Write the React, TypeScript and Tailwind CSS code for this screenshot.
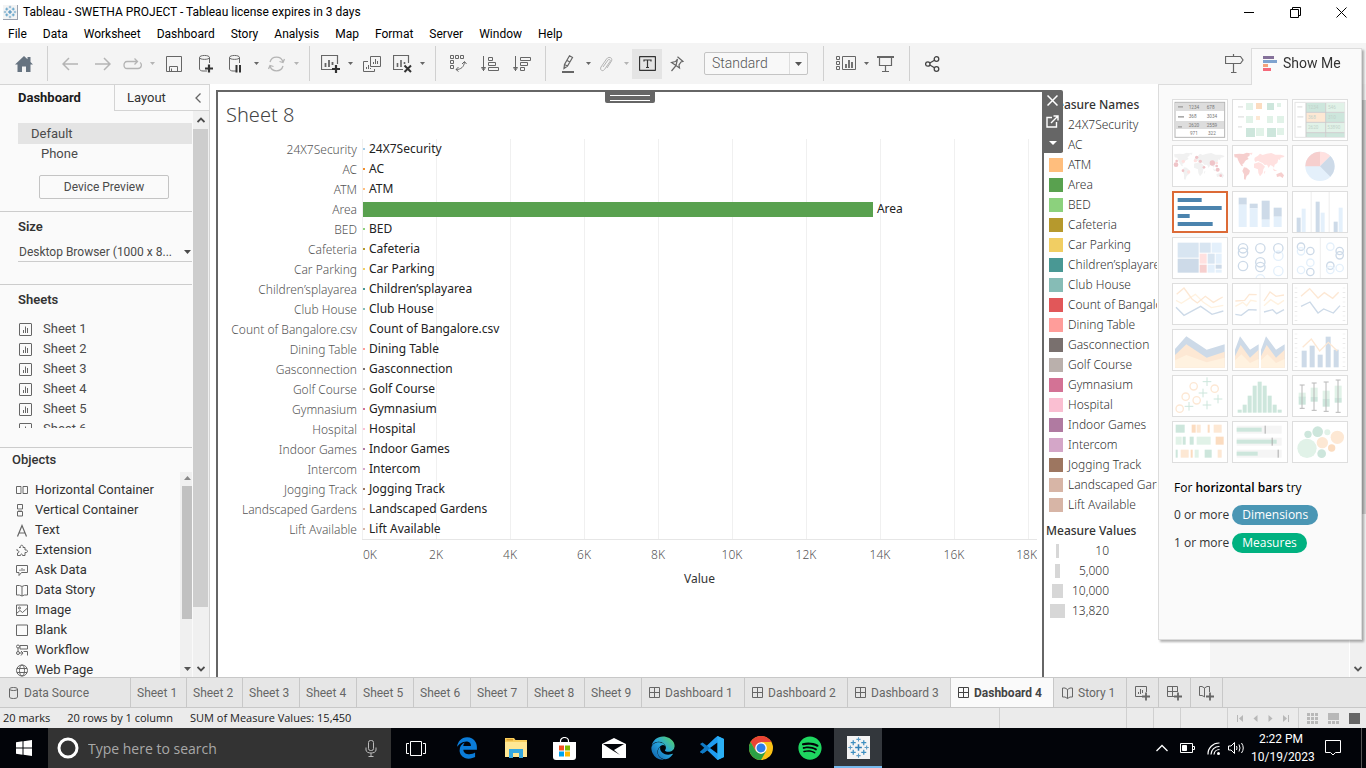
import React from 'react';
import { FaEdge, FaEdgeLegacy, FaSpotify } from 'react-icons/fa';

type Kids = { children?: React.ReactNode };

const Svg = ({ w, h, children, cls = '' }: Kids & { w: number; h: number; cls?: string }) => (
  <svg width={w} height={h} viewBox={`0 0 ${w} ${h}`} fill="none" stroke="currentColor" className={`shrink-0 ${cls}`} aria-hidden="true">
    {children}
  </svg>
);

/* ---------- Logo ---------- */
const plus = (x: number, y: number, r: number) => `M${x - r} ${y}H${x + r}M${x} ${y - r}V${y + r}`;
const TableauMark = ({ size }: { size: number }) => (
  <svg width={size} height={size} viewBox="0 0 24 24" fill="none" aria-hidden="true">
    <rect width="24" height="24" fill="#f4f4f4" />
    <path d={plus(12, 12, 3.5)} stroke="#2f7fb5" strokeWidth="1.6" />
    <path d={plus(6.5, 7, 2.6) + plus(17.5, 7, 2.6) + plus(6.5, 17, 2.6) + plus(17.5, 17, 2.6)} stroke="#3d8fc0" strokeWidth="1.3" />
    <path d={plus(12, 3.5, 2.2) + plus(12, 20.5, 2.2) + plus(3.5, 12, 2.2) + plus(20.5, 12, 2.2)} stroke="#5b9bc4" strokeWidth="1.1" />
  </svg>
);

/* ---------- Title and menu ---------- */
function TitleBar() {
  return (
    <header className="bg-white text-black">
      <div className="flex h-6 items-center">
        <div className="ml-[3px] flex size-[15px] items-center justify-center border-r border-b border-gray-400">
          <TableauMark size={14} />
        </div>
        <h1 className="ml-[5px] text-[12px] leading-4">Tableau - SWETHA PROJECT - Tableau license expires in 3 days</h1>
        <div className="mr-0.5 ml-auto flex">
          <button aria-label="Minimize" className="flex w-[46px] justify-center"><Svg w={11} h={11}><path d="M0 5.500H10" /></Svg></button>
          <button aria-label="Restore" className="flex w-[46px] justify-center"><Svg w={11} h={11}><path d="M.5 2.500H8.500V10.500H.5ZM2.500 2.500V.5H10.500V8.500H8.500" /></Svg></button>
          <button aria-label="Close" className="flex w-[46px] justify-center"><Svg w={11} h={11}><path d="M.5 .5L10.500 10.500M10.500 .5L.5 10.500" /></Svg></button>
        </div>
      </div>
      <nav className="flex h-[19px] items-center gap-4 pl-2 text-[12px]">
        {['File', 'Data', 'Worksheet', 'Dashboard', 'Story', 'Analysis', 'Map', 'Format', 'Server', 'Window', 'Help'].map((m) => (
          <button key={m}>{m}</button>
        ))}
      </nav>
    </header>
  );
}

/* ---------- Toolbar ---------- */
const Sep = () => <span className="mr-1.5 ml-[7px] h-[35px] w-px bg-[#d0d0d0]" />;
const Tool = ({ label, w = 'w-8', cls = 'text-[#666]', children }: Kids & { label: string; w?: string; cls?: string }) => (
  <button aria-label={label} className={`flex h-[30px] shrink-0 items-center justify-center ${w} ${cls}`}>{children}</button>
);
const Caret = ({ label, cls = 'text-[#666]' }: { label: string; cls?: string }) => (
  <Tool label={label} w="w-3" cls={cls}><Svg w={5} h={3}><path d="M0 0H5L2.500 3Z" fill="currentColor" stroke="none" /></Svg></Tool>
);
const cylinder = 'M9 17H5C3 17 1.500 16 1.500 15V3.500C1.500 .8 11.500 .8 11.500 3.500V9M1.500 3.500C1.500 6 11.500 6 11.500 3.500';

function Toolbar() {
  return (
    <div role="toolbar" aria-label="Main" className="flex h-[41px] items-center bg-[#f4f4f4]">
      <Tool label="Home" w="w-10 pl-2" cls="text-[#667380]"><Svg w={18} h={16}><path d="M9 0L0 8.500H2.500V16H7V10.500H11V16H15.500V8.500H18L15.500 6V1H12.500V3.200Z" fill="currentColor" stroke="none" /></Svg></Tool>
      <Sep />
      <Tool label="Undo" cls="text-[#b4b4b4]"><Svg w={17} h={14}><path d="M16 7H1M7 1L1 7L7 13" strokeWidth="1.500" /></Svg></Tool>
      <Tool label="Redo" cls="text-[#b4b4b4]"><Svg w={17} h={14}><path d="M1 7H16M10 1L16 7L10 13" strokeWidth="1.500" /></Svg></Tool>
      <Tool label="Replay animation" w="w-7" cls="text-[#b4b4b4]"><Svg w={19} h={12}><path d="M14 3.500H4C0 3.500 0 10.500 4 10.500H15C19 10.500 19 5.500 17 4.500M11.500 .5L14.500 3.500L11.500 6.500" strokeWidth="1.300" /></Svg></Tool>
      <Caret label="Replay options" cls="text-[#b4b4b4]" />
      <Tool label="Save"><Svg w={16} h={16}><path d="M.5 .5H15.500V15.500H.5ZM3.500 15V10.500H11.500V15M5.500 15V12.500" /></Svg></Tool>
      <Tool label="New data source"><Svg w={16} h={20}><path d={cylinder} /><path d="M7 14.500H15M11 10.500V18.500" strokeWidth="2.200" stroke="#333" /></Svg></Tool>
      <Tool label="Pause auto updates" w="w-7"><Svg w={16} h={20}><path d={cylinder} /><path d="M8.500 11V18.500M12 11V18.500" strokeWidth="2" stroke="#333" /></Svg></Tool>
      <Caret label="Pause options" />
      <Tool label="Refresh" w="w-7" cls="text-[#b4b4b4]"><Svg w={17} h={16}><path d="M2 6A6.800 6.800 0 0 1 15 6M15 10A6.800 6.800 0 0 1 2 10M16.500 3L15 6.500L11.500 5.500M.5 13L2 9.500L5.500 10.500" strokeWidth="1.300" /></Svg></Tool>
      <Caret label="Refresh options" cls="text-[#b4b4b4]" />
      <Sep />
      <Tool label="New worksheet" w="w-7"><Svg w={19} h={18}><path d="M11 14.500H.5V.5H16.500V9" strokeWidth="1.200" /><path d="M4.500 12V8M8 12V5M11.500 10V7" strokeWidth="1.800" /><path d="M11 14H19M15 10V18" strokeWidth="2.200" stroke="#333" /></Svg></Tool>
      <Caret label="New options" />
      <Tool label="Duplicate"><Svg w={18} h={16}><path d="M7.500 .5H17.500V10.500H7.500ZM5 5.500H.5V15.500H11.500V13" /><path d="M10.500 8V6M12.500 8V3M14.500 8V5M3.500 13V11M5.500 13V9M7.500 13V12" /></Svg></Tool>
      <Tool label="Clear sheet" w="w-7"><Svg w={19} h={18}><path d="M10 14.500H.5V.5H15.500V8" strokeWidth="1.200" /><path d="M4.500 12V8M8 12V5M11.500 9V7" strokeWidth="1.600" /><path d="M11.500 10.500L18 17M18 10.500L11.500 17" strokeWidth="2" stroke="#333" /></Svg></Tool>
      <Caret label="Clear options" />
      <Sep />
      <Tool label="Swap rows and columns"><Svg w={17} h={17}><path d="M.5 .5H3.500V3.500H.5ZM5.500 .5H8.500V3.500H5.500ZM10.500 .5H13.500V3.500H10.500ZM.5 5.500H3.500V8.500H.5ZM.5 10.500H3.500V13.500H.5ZM6 14.500C11 14.500 14 12 14.500 7M12 9L14.500 6.500L16.500 9M8.500 12L6 14.500L8.500 16.500" /></Svg></Tool>
      <Tool label="Sort ascending"><Svg w={18} h={16}><path d="M2.500 0V15M.5 11.500L2.500 14.500L4.500 11.500ZM7.500 1.500H11.500V4.500H7.500ZM7.500 6.500H14.500V9.500H7.500ZM7.500 11.500H17.500V14.500H7.500Z" /></Svg></Tool>
      <Tool label="Sort descending"><Svg w={18} h={16}><path d="M2.500 0V15M.5 11.500L2.500 14.500L4.500 11.500ZM7.500 1.500H17.500V4.500H7.500ZM7.500 6.500H14.500V9.500H7.500ZM7.500 11.500H11.500V14.500H7.500Z" /></Svg></Tool>
      <Sep />
      <Tool label="Highlight" w="w-8"><Svg w={14} h={18}><path d="M8.500 .8L11.500 2.500L6.500 11L3 13.500L3.500 9.500ZM3.500 9.500L6.500 11M9 7L6 5.500" strokeWidth="1.200" /><path d="M1 17H13" strokeWidth="2" /></Svg></Tool>
      <Tool label="Highlight options" w="w-2"><Svg w={5} h={3}><path d="M0 0H5L2.500 3Z" fill="currentColor" stroke="none" /></Svg></Tool>
      <Tool label="Group members" w="w-7" cls="text-[#b4b4b4]"><Svg w={14} h={16}><path d="M4 11L9 4C10 2.500 12 4 11 5.500L5.500 13.500C3.500 16 .5 14 2 11L7.500 3C9.500 0 14 1.500 12.500 5L8 12" /></Svg></Tool>
      <Caret label="Group options" cls="text-[#b4b4b4]" />
      <Tool label="Show mark labels" w="w-[30px]" cls="bg-[#e4e4e4] text-[#333]"><Svg w={17} h={15}><rect x=".5" y=".5" width="16" height="14" rx="1" strokeWidth="1.300" /><path d="M5 5.500V4H12V5.500M8.500 4V11.500M7 11.500H10" strokeWidth="1.200" /></Svg></Tool>
      <Tool label="Fix axes" w="w-[30px]"><Svg w={14} h={16}><path d="M7.500 .8L13 5.500L11 6L9 9L9.500 12L6 9.500L1.500 15M6 9.500L1.500 6.500L5.500 5.500L7.500 3Z" strokeWidth="1.200" /></Svg></Tool>
      <div className="mr-2 ml-3 flex h-[23px] w-[104px] rounded-xs border border-[#c4c4c4] bg-[#f8f8f8] text-[#555]">
        <label className="sr-only" htmlFor="fit">Fit</label>
        <select id="fit" className="w-[85px] appearance-none border-r border-[#ddd] pl-[7px] text-[14px] leading-[21px] font-light outline-none">
          <option>Standard</option>
        </select>
        <span className="flex flex-1 items-center justify-center"><Svg w={7} h={4}><path d="M0 0H7L3.500 4Z" fill="currentColor" stroke="none" /></Svg></span>
      </div>
      <Sep />
      <Tool label="Show cards" w="w-8"><Svg w={20} h={15}><path d="M.5 .5H3.500V3.500H.5ZM.5 5.500H3.500V8.500H.5ZM.5 10.500H3.500V13.500H.5ZM6.500 .5H19.500V13.500H6.500Z" /><path d="M10 12V8M13 12V4M16 12V6" strokeWidth="1.800" /></Svg></Tool>
      <Tool label="Card options" w="w-2"><Svg w={5} h={3}><path d="M0 0H5L2.500 3Z" fill="currentColor" stroke="none" /></Svg></Tool>
      <Tool label="Presentation mode"><Svg w={18} h={16}><path d="M0 1H17" strokeWidth="2" /><path d="M2.500 2V9.500H14.500V2M8.500 10V15M5 15.500H12" strokeWidth="1.200" /></Svg></Tool>
      <Sep />
      <Tool label="Share" cls="text-[#444]"><Svg w={15} h={16}><circle cx="2.800" cy="8" r="2.200" strokeWidth="1.300" /><circle cx="11.500" cy="3" r="2.300" strokeWidth="1.300" /><circle cx="11.500" cy="13" r="2.300" strokeWidth="1.300" /><path d="M4.800 7L9.500 4.200M4.800 9L9.500 11.800" strokeWidth="1.300" /></Svg></Tool>
      <div className="mr-[116px] ml-auto"><Tool label="Tour"><Svg w={19} h={19}><path d="M.5 2.500H15.500L18 6L15.500 9.500H.5ZM8.500 0V2.500M8.500 10V18M6 18.500H11.500" strokeWidth="1.200" /></Svg></Tool></div>
    </div>
  );
}

/* ---------- Left panel ---------- */
const sheetIcon = <Svg w={13} h={13} cls="text-[#666]"><rect x=".5" y=".5" width="12" height="12" rx=".5" /><path d="M4.500 10V7M6.500 10V3.500M8.500 10V5" /></Svg>;

const objects: [string, React.ReactNode][] = [
  ['Horizontal Container', <><path d="M.5 2.500H5V9.500H.5ZM7 2.500H11.500V9.500H7Z" /><path d="M5.500 3V9" stroke="#bbb" strokeWidth="2" /></>],
  ['Vertical Container', <><path d="M1.500 .5H6.500V5H1.500ZM1.500 7.500H6.500V12H1.500Z" /><path d="M2 6H6" stroke="#bbb" strokeWidth="2" /></>],
  ['Text', <path d="M1.500 12.500L6 1.500L10.500 12.500M3 9H9" strokeWidth="1.200" />],
  ['Extension', <path d="M3 3.500H4.500C3.500 .5 8 .5 7 3.500H9V6C12.500 5.500 12.500 9 9 8.500V11.500H6.500C6.500 9.500 4.500 9.500 4.500 11.500H1.500V9C3.500 9 3.500 6.500 1 6.500V5" />],
  ['Ask Data', <><path d="M.5 1.500H11.500V8.500H5.500L3 11.500V8.500H.5Z" /><path d="M4 7V5.500M6 7V4M8 7V5" /></>],
  ['Data Story', <path d="M.5 1.500H3.500L6 2.500L8.500 1.500H11.500V11H8.500L6 12L3.500 11H.5ZM6 3V12" />],
  ['Image', <><path d="M.5 1H11.500V11.500H.5Z" /><circle cx="3.500" cy="4" r="1" /><path d="M.5 9.500L4 6.500L6.500 8.500L11.500 4" /></>],
  ['Blank', <path d="M.5 1H11.500V11.500H.5Z" />],
  ['Workflow', <><circle cx="2" cy="2.500" r="1.500" /><circle cx="2" cy="9" r="1.500" /><path d="M4 1.500H11.500V5H4ZM7.500 7.500H11.500V11.500M3.500 9H6M2 4V7.500M5 7L7 9L5 11.500" /></>],
  ['Web Page', <><circle cx="6" cy="6.500" r="5.500" /><ellipse cx="6" cy="6.500" rx="2.500" ry="5.500" /><path d="M1 4.500H11M1 8.500H11" /></>],
];

function LeftPanel() {
  return (
    <aside className="flex w-[210px] shrink-0 flex-col border-t border-r border-[#d4d4d4] bg-[#fafafa] text-[13px] text-[#4b4b4b]">
      <div className="flex h-[26px] shrink-0">
        <button className="w-[114px] pl-[18px] text-left font-bold text-[#1b1b1b]">Dashboard</button>
        <div className="flex flex-1 items-center border-b border-l border-[#d4d4d4] pl-3">
          <button className="text-[#333]">Layout</button>
          <button aria-label="Collapse" className="mr-2 ml-auto text-[#666]"><Svg w={6} h={10}><path d="M5.500 .5L1 5L5.500 9.500" strokeWidth="1.300" /></Svg></button>
        </div>
      </div>
      <div className="flex min-h-0 flex-1">
        <div className="flex min-w-0 flex-1 flex-col overflow-hidden">
          <section className="flex shrink-0 flex-col border-b border-[#ccc] py-3">
            <button className="ml-[18px] h-[21px] bg-[#e4e4e4] pl-[13px] text-left">Default</button>
            <button className="ml-[41px] h-5 text-left">Phone</button>
            <button className="mt-[11px] ml-[39px] h-6 w-[130px] rounded-xs border border-[#c4c4c4] pb-px text-[12px]">Device Preview</button>
          </section>
          <section className="h-[73px] shrink-0 border-b border-[#ccc] pt-1.5 pl-[18px]">
            <h2 className="leading-[18px] font-semibold text-[#333]">Size</h2>
            <label className="sr-only" htmlFor="size">Dashboard size</label>
            <div className="mt-1.5 flex h-5 items-center border-b border-[#ccc]">
              <select id="size" className="w-[166px] appearance-none pl-px text-[12px] leading-[18px] outline-none"><option>Desktop Browser (1000 x 8...</option></select>
              <Svg w={7} h={4} cls="ml-auto mr-px"><path d="M0 0H7L3.500 4Z" fill="currentColor" stroke="none" /></Svg>
            </div>
          </section>
          <section className="h-[163px] shrink-0 border-b border-[#ccc] pt-1.5 pl-[18px]">
            <h2 className="leading-[18px] font-semibold text-[#333]">Sheets</h2>
            <ul className="mt-2.5 h-[109px] overflow-hidden">
              {[1, 2, 3, 4, 5, 6].map((n) => (
                <li key={n} className="flex h-5 items-center gap-[11px] pl-px">{sheetIcon}<span>Sheet {n}</span></li>
              ))}
            </ul>
          </section>
          <section className="flex min-h-0 flex-1 flex-col pt-[3px]">
            <h2 className="pl-3 leading-[18px] font-medium text-[#333]">Objects</h2>
            <div className="mt-[11px] flex min-h-0 flex-1">
              <ul className="min-w-0 flex-1 overflow-hidden">
                {objects.map(([name, icon]) => (
                  <li key={name} className="flex h-5 items-center gap-[7px] pl-4 whitespace-nowrap text-[#333]"><Svg w={12} h={13} cls="text-[#666]">{icon}</Svg>{name}</li>
                ))}
              </ul>
              <div className="-mt-2 flex w-3 flex-col items-center bg-[#f0f0f0] pt-1 pl-0.5">
                <Svg w={7} h={4} cls="mb-1.5 text-[#888]"><path d="M0 4H7L3.500 0Z" fill="currentColor" stroke="none" /></Svg>
                <span className="h-[133px] w-[10px] bg-[#c1c1c1]" />
                <Svg w={7} h={4} cls="mt-auto mb-1.5 text-[#555]"><path d="M0 0H7L3.500 4Z" fill="currentColor" stroke="none" /></Svg>
              </div>
            </div>
          </section>
        </div>
        <div className="ml-px flex w-4 flex-col items-center bg-[#f0f0f0] pr-px">
          <Svg w={8} h={6} cls="my-[6px]"><path d="M.5 5L4 1.500L7.500 5" strokeWidth="1.800" /></Svg>
          <span className="h-[478px] w-[15px] bg-[#cdcdcd]" />
          <Svg w={8} h={6} cls="mt-auto mb-[5px]"><path d="M.5 1L4 4.500L7.500 1" strokeWidth="1.800" /></Svg>
        </div>
      </div>
    </aside>
  );
}

/* ---------- Chart ---------- */
const marks: { name: string; color: string; value: number }[] = [
  { name: '24X7Security', color: '#a0cbe8', value: 90 },
  { name: 'AC', color: '#f28e2b', value: 90 },
  { name: 'ATM', color: '#ffbe7d', value: 90 },
  { name: 'Area', color: '#59a14f', value: 13820 },
  { name: 'BED', color: '#8cd17d', value: 90 },
  { name: 'Cafeteria', color: '#b6992d', value: 90 },
  { name: 'Car Parking', color: '#f1ce63', value: 90 },
  { name: 'Children’splayarea', color: '#499894', value: 90 },
  { name: 'Club House', color: '#86bcb6', value: 90 },
  { name: 'Count of Bangalore.csv', color: '#e15759', value: 10 },
  { name: 'Dining Table', color: '#ff9d9a', value: 90 },
  { name: 'Gasconnection', color: '#79706e', value: 90 },
  { name: 'Golf Course', color: '#bab0ac', value: 90 },
  { name: 'Gymnasium', color: '#d37295', value: 90 },
  { name: 'Hospital', color: '#fabfd2', value: 90 },
  { name: 'Indoor Games', color: '#b07aa1', value: 90 },
  { name: 'Intercom', color: '#d4a6c8', value: 90 },
  { name: 'Jogging Track', color: '#9d7660', value: 90 },
  { name: 'Landscaped Gardens', color: '#d7b5a6', value: 90 },
  { name: 'Lift Available', color: '#d7b5a6', value: 90 },
];

function Chart() {
  return (
    <section className="relative flex w-[828px] shrink-0 flex-col border-2 border-b-0 border-[#666] bg-white font-['Noto_Sans',sans-serif] text-[12px]">
      <h2 className="mt-2.5 ml-2 text-[20px] leading-[26px] font-light text-[#444]">Sheet 8</h2>
      <div className="mt-[11px] flex">
        <ul className="w-[139px] shrink-0 pt-px text-right font-light whitespace-nowrap text-[#555]">
          {marks.map((m) => <li key={m.name} className="h-5 leading-5">{m.name}</li>)}
        </ul>
        <div className="ml-[5px] min-w-0 flex-1 pr-[5px]">
          <ul className="border-b border-[#e6e6e6] bg-[repeating-linear-gradient(90deg,#f0f0f0_0_1px,transparent_1px_74px)]">
            {marks.map((m) => (
              <li key={m.name} className="flex h-5 items-center gap-1 text-[#222]">
                {m.value > 1000 ? (
                  <span className="ml-px h-[15px]" style={{ width: m.value / 27.1, background: m.color }} />
                ) : (
                  <span className="ml-px h-0.5 w-0.5" style={{ background: m.value > 50 ? m.color : 'transparent' }} />
                )}
                <span className="leading-5">{m.name}</span>
              </li>
            ))}
          </ul>
          <div className="flex h-[29px] items-center overflow-hidden pl-px font-light text-[#555]">
            <span className="w-9 shrink-0">0K</span>
            {[2, 4, 6, 8, 10, 12, 14, 16].map((n) => <span key={n} className="w-[74px] shrink-0 text-center">{n}K</span>)}
            <span className="flex-1 text-right">18K</span>
          </div>
          <p className="text-center leading-5 text-[#333]">Value</p>
        </div>
      </div>
      <div className="absolute -top-0.5 left-[387px] flex h-[13px] w-[50px] flex-col justify-center gap-1 rounded-b-xs bg-[#666] px-[5px] pt-0.5">
        <span className="h-px bg-white" /><span className="h-px bg-white" />
      </div>
      <div className="absolute -top-0.5 left-full z-10 flex h-[63px] w-[21px] flex-col items-center justify-between rounded-r-xs bg-[#666] pt-[5px] pb-1 text-white">
        <button aria-label="Remove from dashboard"><Svg w={11} h={11}><path d="M.5 .5L10.500 10.500M10.500 .5L.5 10.500" strokeWidth="1.500" /></Svg></button>
        <button aria-label="Go to sheet" className="-mt-1"><Svg w={13} h={13}><path d="M6 2.500H1V12H10.500V7M5 8L11.500 1.500M7.500 1H12V5.500" strokeWidth="1.400" /></Svg></button>
        <button aria-label="More options" className="pb-1"><Svg w={8} h={4}><path d="M0 0H8L4 4Z" fill="currentColor" stroke="none" /></Svg></button>
      </div>
    </section>
  );
}

function Legends() {
  return (
    <aside className="w-[166px] shrink-0 overflow-hidden bg-white pt-[5px] pl-0.5 font-['Noto_Sans',sans-serif] text-[12px] font-light text-[#333]">
      <h3 className="leading-5 font-medium text-[#333]">Measure Names</h3>
      <ul className="w-[111px] overflow-hidden whitespace-nowrap">
        {marks.map((m) => (
          <li key={m.name} className="flex h-5 items-center gap-[5px] pl-[3px]">
            <span className="size-3.5 shrink-0" style={{ background: m.color }} />{m.name}
          </li>
        ))}
      </ul>
      <h3 className="mt-1.5 leading-5 font-medium text-[#333]">Measure Values</h3>
      <ul className="w-[63px]">
        {[['10', 'w-[3px]'], ['5,000', 'w-[5px]'], ['10,000', 'w-[11px]'], ['13,820', 'w-[15px]']].map(([n, w]) => (
          <li key={n} className="flex h-5 items-center justify-between">
            <span className="flex w-[23px] justify-center"><span className={`h-3.5 bg-[#d7d7d7] ${w}`} /></span>{n}
          </li>
        ))}
      </ul>
    </aside>
  );
}

/* ---------- Show Me thumbnails, drawn on a 168 x 126 grid ---------- */
type R = [number, number, number, number, string];
const Rects = ({ d }: { d: R[] }) => <>{d.map(([x, y, w, h, f], i) => <rect key={i} x={x} y={y} width={w} height={h} fill={f} />)}</>;
const Line = ({ p, c, w = 4 }: { p: string; c: string; w?: number }) => <polyline points={p} fill="none" stroke={c} strokeWidth={w} />;
const LG = '#e1f2e8', DG = '#cde6dc', LO = '#fde8d4', DO = '#fbdcc0', LB = '#e4f0fb', MB = '#d8e5f1', DB = '#cddae8', PK = '#ffe1e0', DP = '#f6cfce', YE = '#fff2e0';

const World = ({ a, b }: { a: string; b: string }) => (
  <>
    <path fill={a} d="M6 28L22 26L34 27L44 23L54 25L52 33L46 36L50 42L42 46L38 50L36 55L31 57L33 64L28 62L22 53L18 45L16 38L8 37ZM36 67L44 68L54 77L51 87L44 93L40 105L36 102L36 88L31 78Z" />
    <path fill={b} d="M52 24L62 23L58 31ZM67 45L68 38L78 32L84 26L92 30L104 26L118 24L130 29L146 29L158 33L154 37L146 38L144 45L139 43L136 54L128 59L126 68L121 63L115 60L110 69L105 59L98 60L92 54L86 52L78 47L70 51ZM66 56L80 52L90 56L99 65L94 73L92 84L84 94L79 84L78 73L66 68ZM96 80L100 78L98 88ZM122 70L130 75L136 78L126 78Z" />
    <path fill={a} d="M133 88L142 84L148 82L156 91L152 99L144 94L135 96Z" />
  </>
);
const Dots = ({ d, c, w = 4 }: { d: number[][]; c?: string; w?: number }) => <>{d.map(([x, y, r, k], i) => <circle key={i} cx={x} cy={y} r={r} fill="none" stroke={c ?? (k ? DB : LB)} strokeWidth={w} />)}</>;
const Balls = ({ d, c }: { d: number[][]; c: string }) => <>{d.map(([x, y, r], i) => <circle key={i} cx={x} cy={y} r={r} fill={c} />)}</>;
const Nums = ({ d, f }: { d: [number, number, string][]; f: string }) => <>{d.map(([x, y, t]) => <text key={t} x={x} y={y} fontSize="14" fill={f}>{t}</text>)}</>;

const thumbs: [string, React.ReactNode][] = [
  ['text table', <><rect x="9" y="10" width="149" height="105" fill="#fff" stroke="#b4b4b4" strokeWidth="3" /><Rects d={[[11, 12, 145, 24, '#ddd'], [11, 66, 145, 24, '#ddd'], [18, 21, 15, 5, '#aaa'], [18, 51, 18, 5, '#aaa'], [18, 81, 12, 5, '#aaa']]} /><Nums f="#777" d={[[50, 30, '1234'], [104, 30, '678'], [50, 57, '368'], [104, 57, '3034'], [50, 84, '2620'], [104, 84, '2559'], [54, 109, '971'], [108, 109, '322']]} /></>],
  ['heat map', <Rects d={[[18, 21, 15, 5, '#e8e8e8'], [18, 51, 18, 5, '#e8e8e8'], [18, 81, 12, 5, '#e8e8e8'], [42, 12, 21, 21, LG], [72, 12, 18, 18, DO], [105, 12, 21, 21, DG], [135, 12, 12, 12, LG], [42, 51, 21, 21, LG], [72, 51, 12, 12, LO], [105, 51, 18, 21, LG], [135, 51, 21, 21, LG], [42, 87, 27, 27, DG], [72, 87, 24, 24, LG], [105, 87, 27, 27, DG], [135, 87, 21, 21, LG]]} />],
  ['highlight table', <><rect x="9" y="10" width="149" height="105" fill="#fff" stroke="#e4e4e4" strokeWidth="3" /><Rects d={[[16, 21, 15, 5, '#e8e8e8'], [16, 51, 18, 5, '#e8e8e8'], [16, 81, 12, 5, '#e8e8e8'], [42, 12, 58, 27, DG], [102, 12, 55, 27, LG], [42, 42, 58, 27, LO], [102, 42, 55, 27, DG], [42, 72, 58, 27, LG], [102, 72, 55, 27, LG], [42, 102, 58, 12, DG], [102, 102, 55, 12, DG]]} /><path d="M42 40H157M42 70H157M42 101H157M101 12V114M42 12V114" stroke="#ccc" strokeWidth="3" /><Nums f="#c2d2ca" d={[[48, 30, '1234'], [108, 30, '546'], [48, 60, '368'], [108, 60, '310'], [48, 90, '2620'], [106, 90, '53890']]} /></>],
  ['symbol maps', <><World a="#f1f1f1" b="#f1f1f1" /><Balls c="#efc4c8" d={[[12, 59, 7], [14, 48, 4], [74, 37, 5], [85, 49, 5], [121, 54, 8], [134, 63, 4], [137, 74, 6], [33, 77, 4], [96, 67, 4], [146, 92, 4]]} /><Balls c={PK} d={[[34, 49, 5], [70, 47, 5], [50, 81, 5], [134, 54, 4]]} /></>],
  ['filled maps', <World a={DP} b={PK} />],
  ['pie chart', <><circle cx="84" cy="64" r="44" fill={LB} /><path d="M84 64V20A44 44 0 0 0 40 64Z" fill={DP} /><path d="M84 64V20A44 44 0 0 1 115 33Z" fill={PK} /><path d="M84 64L115 33A44 44 0 0 1 115 95Z" fill={DB} /></>],
  ['horizontal bars', <Rects d={[[17, 21, 72, 12, '#4c84ae'], [17, 45, 132, 12, '#4c84ae'], [17, 69, 36, 12, '#4c84ae'], [17, 93, 105, 12, '#4c84ae']]} />],
  ['stacked bars', <Rects d={[[20, 20, 24, 21, DB], [20, 41, 24, 67, LB], [53, 38, 24, 14, DB], [53, 52, 24, 56, LB], [89, 29, 24, 57, DB], [89, 86, 24, 22, LB], [125, 50, 24, 27, DB], [125, 77, 24, 31, LB]]} />],
  ['side-by-side bars', <Rects d={[[56, 2, 3, 121, '#eee'], [110, 2, 3, 121, '#eee'], [14, 80, 12, 43, DB], [29, 53, 12, 70, LB], [71, 32, 12, 91, DB], [86, 65, 12, 58, LB], [125, 92, 12, 31, DB], [140, 50, 12, 73, LB]]} />],
  ['treemap', <Rects d={[[17, 17, 63, 45, MB], [17, 65, 63, 42, DB], [83, 17, 33, 30, MB], [119, 17, 30, 30, LB], [83, 50, 21, 30, PK], [107, 50, 21, 30, MB], [131, 50, 18, 30, LB], [83, 83, 21, 24, DP], [107, 83, 21, 24, LB], [131, 83, 18, 12, DB], [131, 98, 18, 9, LB]]} />],
  ['circle views', <Dots d={[[33, 34, 14, 1], [33, 47, 14, 1], [33, 87, 14, 1], [85, 34, 14, 1], [85, 76, 14, 1], [85, 90, 14, 1], [139, 34, 14, 1], [139, 56, 14, 0], [139, 102, 14, 0], [85, 126, 13, 0]]} />],
  ['side-by-side circles', <><path d="M85 2V124" stroke="#eee" strokeWidth="3" /><Dots d={[[27, 29, 11, 1], [27, 43, 11, 0], [55, 42, 11, 1], [55, 77, 11, 0], [27, 99, 11, 0], [55, 105, 11, 1], [115, 29, 11, 0], [143, 42, 11, 1], [143, 55, 11, 1], [115, 86, 11, 1], [115, 99, 11, 0], [143, 93, 11, 0]]} /></>],
  ['continuous lines', <><Line c={YE} p="12,52 28,61 70,34 94,58 118,74 154,67" /><Line c={LO} p="14,34 36,15 60,48 76,60 100,40 124,58 152,42" /><Line c={DB} p="12,73 36,97 86,70 120,94 154,84" /></>],
  ['discrete lines', <><path d="M84 2V124" stroke="#eee" strokeWidth="3" /><Line c={LO} p="10,54 38,52 52,34 74,35" /><Line c={LO} p="96,54 114,27 132,40 156,36" /><Line c={YE} p="10,70 32,58 44,68 56,52 74,55" /><Line c={YE} p="96,68 116,50 138,64 156,52" /><Line c={DB} p="10,94 28,97 50,80 74,81" /><Line c={DB} p="96,87 122,80 134,92 156,80" /></>],
  ['dual lines', <><path d="M12 14V118M156 14V118" stroke="#e4e4e4" strokeWidth="8" strokeDasharray="2 12" /><Line c={LO} p="27,40 53,17 78,45 97,29 122,46 140,28" /><Line c={DB} p="27,70 54,57 78,90 95,78 124,90 144,68" /></>],
  ['area charts', <><polygon points="9,60 43,22 104,62 158,46 158,116 9,116" fill={DB} /><polygon points="9,78 43,46 104,86 158,68 158,116 9,116" fill={LO} /><polygon points="9,94 43,78 104,100 158,86 158,116 9,116" fill={YE} /></>],
  ['discrete area charts', <>{[0, 78].map((x) => <g key={x} transform={`translate(${x})`}><polygon points="9,62 24,22 54,62 80,46 80,116 9,116" fill={DB} /><polygon points="9,82 26,48 54,86 80,62 80,116 9,116" fill={LO} /><polygon points="9,94 28,76 54,102 80,90 80,116 9,116" fill={YE} /></g>)}</>],
  ['dual combination', <><path d="M12 14V118M156 14V118" stroke="#e4e4e4" strokeWidth="8" strokeDasharray="2 12" /><Rects d={[[29, 65, 15, 50, DB], [53, 50, 15, 65, DB], [77, 77, 15, 38, DB], [101, 23, 15, 92, DB], [125, 62, 15, 53, DB]]} /><Line c={LO} p="32,55 58,30 83,66 109,40 136,66" /></>],
  ['scatter plots', <><Dots c={LO} d={[[23, 101, 11], [41, 65, 11], [65, 34, 11], [74, 76, 11], [128, 41, 11]]} /><path d={plus(105, 20, 13) + plus(93, 54, 13) + plus(138, 72, 13) + plus(51, 94, 13) + plus(105, 90, 13)} stroke={DG} strokeWidth="3" /></>],
  ['histogram', <Rects d={[[17, 104, 12, 9, DG], [32, 89, 12, 24, DG], [47, 62, 12, 51, DG], [62, 32, 12, 81, DG], [77, 20, 12, 93, DG], [92, 32, 12, 81, DG], [107, 62, 12, 51, DG], [122, 89, 12, 24, DG], [137, 104, 12, 9, DG]]} />],
  ['box-and-whisker plots', <><Rects d={[[20, 53, 21, 15, LG], [20, 65, 21, 24, DG], [56, 38, 21, 28, LG], [56, 66, 21, 14, DG], [92, 47, 21, 24, LG], [92, 71, 21, 24, DG], [128, 32, 21, 36, LG], [128, 68, 21, 15, DG]]} /><path d="M30 30V100M23 30H38M23 100H38M66 24V106M59 24H74M59 106H74M102 21V109M95 21H110M95 109H110M138 15V112M131 15H146M131 112H146" stroke="#b8b8b8" strokeWidth="3" /></>],
  ['gantt chart', <Rects d={[[11, 11, 27, 24, DG], [59, 11, 12, 24, DO], [74, 11, 12, 24, LO], [107, 11, 6, 24, DO], [125, 11, 24, 24, LO], [11, 47, 18, 24, LG], [32, 47, 9, 24, DG], [53, 47, 12, 24, DG], [74, 47, 42, 24, LG], [131, 47, 24, 24, DO], [11, 86, 6, 24, DG], [26, 86, 24, 24, LO], [56, 86, 6, 24, DO], [68, 86, 12, 24, LG], [98, 86, 21, 24, DG], [137, 86, 12, 24, LO]]} />],
  ['bullet graphs', <Rects d={[[14, 14, 135, 24, '#f5f5f5'], [14, 20, 75, 12, DG], [98, 14, 3, 24, '#aaa'], [14, 50, 135, 24, '#f5f5f5'], [14, 56, 120, 12, DG], [119, 50, 3, 24, '#aaa'], [14, 86, 135, 24, '#f5f5f5'], [14, 92, 63, 12, DG], [137, 86, 3, 24, '#aaa']]} />],
  ['packed bubbles', <><Balls c={DG} d={[[48, 40, 11], [77, 32, 16], [89, 98, 13]]} /><Balls c={LG} d={[[45, 82, 29], [106, 34, 9]]} /><Balls c={LO} d={[[136, 49, 20], [91, 65, 17]]} /><Balls c={DO} d={[[119, 81, 11]]} /></>],
];

function ShowMe() {
  return (
    <div className="absolute top-12 right-1 z-20 flex w-[204px] flex-col items-end text-[12px] text-[#333] drop-shadow-[2px_2px_1px_rgba(0,0,0,0.3)]">
      <button className="z-10 -mb-px flex h-[37px] w-[111px] items-center gap-1.5 border border-b-0 border-[#dcdcdc] bg-[#fafafa] pb-[7px] pl-[11px] text-[14px]">
        <svg width="14" height="15" viewBox="0 0 14 15" aria-hidden="true"><path d="M0 0H11V3H0Z" fill="#85719a" /><path d="M0 4H14V7H0Z" fill="#7fa3cf" /><path d="M0 8H5V11H0Z" fill="#f4a27a" /><path d="M0 12H8V15H0Z" fill="#f5697a" /></svg>
        Show Me
      </button>
      <div className="h-[556px] w-full border border-[#dcdcdc] bg-[#fafafa] px-[13px] pt-[14px]">
        <div className="grid grid-cols-[repeat(3,56px)] gap-1">
          {thumbs.map(([name, art]) => (
            <button key={name} aria-label={name} className={`h-[42px] bg-white ${name === 'horizontal bars' ? 'border-2 border-[#dc6a36]' : 'border border-[#dedede]'}`}>
              <svg className="size-full" viewBox={name === 'horizontal bars' ? '6 6 156 114' : '3 3 162 120'} aria-hidden="true">{art}</svg>
            </button>
          ))}
        </div>
        <div className="flex flex-col gap-2 pt-4 pl-0.5 font-['Open_Sans',sans-serif]">
          <p className="leading-[18px] text-black">For <b className="font-semibold">horizontal bars</b> try</p>
          <p className="flex h-5 items-center gap-[3px]">0 or more <span className="h-5 rounded-full bg-[#4a96b4] px-2.5 leading-5 text-white">Dimensions</span></p>
          <p className="flex h-5 items-center gap-[3px]">1 or more <span className="h-5 rounded-full bg-[#00b180] px-2.5 leading-5 text-white">Measures</span></p>
        </div>
      </div>
    </div>
  );
}

/* ---------- Bottom tabs and status ---------- */
const gridIcon = <Svg w={11} h={11}><path d="M.5 .5H10.500V10.500H.5ZM5.500 .5V10.500M.5 5.500H10.500" /></Svg>;
const storyIcon = <Svg w={11} h={12}><path d="M.5 1H3L5.500 2.500L8 1H10.500V10H8L5.500 11.500L3 10H.5ZM5.500 2.500V11.500" /></Svg>;
const smallPlus = <path d="M7 11.500H15M11 7.500V15.500" strokeWidth="1.800" />;

function SheetTabs() {
  const tab = 'flex shrink-0 items-center border-r border-[#c8c8c8]';
  return (
    <nav aria-label="Sheets" className="flex h-[31px] shrink-0 border-y border-[#c8c8c8] bg-[#e6e6e6] text-[12px] text-[#666]">
      <button className={`${tab} w-[131px] gap-1.5 pl-[9px]`}><Svg w={9} h={12}><path d="M.5 2V10C.5 12 8.500 12 8.500 10V2C8.500 0 .5 0 .5 2C.5 4 8.500 4 8.500 2" /></Svg>Data Source</button>
      {[1, 2, 3, 4, 5, 6, 7, 8, 9].map((n) => <button key={n} className={`${tab} pl-1.5 ${n < 3 ? 'w-14' : 'w-[57px]'}`}>Sheet {n}</button>)}
      {[1, 2, 3, 4].map((n) => <button key={n} className={`${tab} w-[103px] gap-[5px] pl-[7px] ${n === 4 ? 'bg-[#fafafa] font-bold text-[#444]' : ''}`}>{gridIcon}Dashboard {n}</button>)}
      <button className={`${tab} w-[73px] gap-[5px] pl-2`}>{storyIcon}Story 1</button>
      <button aria-label="New worksheet" className={`${tab} w-8 justify-center`}><Svg w={16} h={16}><path d="M7 11.500H.5V1.500H11.500V7M3.500 9V7M5.500 9V4M7.500 8V5" />{smallPlus}</Svg></button>
      <button aria-label="New dashboard" className={`${tab} w-8 justify-center`}><Svg w={16} h={16}><path d="M7 11.500H.5V1.500H10.500V7M5.500 1.500V11.500M.5 6.500H10.500" />{smallPlus}</Svg></button>
      <button aria-label="New story" className={`${tab} w-8 justify-center`}><Svg w={16} h={16}><path d="M6 12L3 10.500H.5V1.500H3L5.500 3L8 1.500H10.500V7M5.500 3V12" />{smallPlus}</Svg></button>
    </nav>
  );
}

function StatusBar() {
  const cell = 'h-full border-l border-[#d0d0d0]';
  return (
    <footer className="flex h-5 shrink-0 items-center bg-[#ebebeb] pl-[3px] font-['Open_Sans',sans-serif] text-[11px] text-[#222]">
      <span className="mr-[17px]">20 marks</span><span className="mr-[17px]">20 rows by 1 column</span><span>SUM of Measure Values: 15,450</span>
      <div className="ml-auto flex h-full text-[#b8b8b8]">
        <span className={`${cell} w-[127px]`} /><span className={`${cell} w-[27px]`} /><span className={`${cell} w-[27px]`} /><span className={`${cell} w-[47px]`} />
        <div className={`${cell} flex w-[71px] items-center justify-around px-1`}>
          <button aria-label="First"><Svg w={7} h={7}><path d="M.5 0V7" /><path d="M6 0V7L2 3.500Z" fill="currentColor" stroke="none" /></Svg></button>
          <button aria-label="Previous"><Svg w={5} h={7}><path d="M4.500 0V7L.5 3.500Z" fill="currentColor" stroke="none" /></Svg></button>
          <button aria-label="Next"><Svg w={5} h={7}><path d="M.5 0V7L4.500 3.500Z" fill="currentColor" stroke="none" /></Svg></button>
          <button aria-label="Last"><Svg w={7} h={7}><path d="M6.500 0V7" /><path d="M1 0V7L5 3.500Z" fill="currentColor" stroke="none" /></Svg></button>
        </div>
        <div className={`${cell} flex w-[68px] items-center justify-between pr-1.5 pl-2`}>
          <button aria-label="Show sheet sorter"><Svg w={11} h={11}><path d="M0 1.500H11M0 5.500H11M0 9.500H11" strokeWidth="3" strokeDasharray="3 1" /></Svg></button>
          <button aria-label="Show filmstrip"><Svg w={11} h={11}><path d="M0 3.500H11" strokeWidth="7" /><path d="M0 9.500H11" strokeWidth="3" strokeDasharray="3 1" /></Svg></button>
          <button aria-label="Show tabs" className="size-[11px] bg-[#666]" />
        </div>
      </div>
    </footer>
  );
}

/* ---------- Taskbar ---------- */
function Taskbar() {
  const app = 'flex h-10 w-[49px] shrink-0 items-center justify-center';
  return (
    <div className="flex h-10 shrink-0 bg-[#020409] text-white">
      <button aria-label="Start" className="flex w-12 items-center justify-center"><svg width="16" height="16" viewBox="0 0 16 16" fill="#fff" aria-hidden="true"><path d="M0 2.200L6.500 1.300V7.500H0ZM7.500 1.200L16 0V7.500H7.500ZM0 8.500H6.500V14.700L0 13.800ZM7.500 8.500H16V16L7.500 14.800Z" /></svg></button>
      <div className="flex w-[343px] items-center bg-[#333] pr-3.5 pl-[9px]">
        <Svg w={22} h={22}><circle cx="11" cy="11" r="9" strokeWidth="3" /></Svg>
        <label className="sr-only" htmlFor="search">Search</label>
        <input id="search" placeholder="Type here to search" className="ml-[9px] min-w-0 flex-1 bg-transparent font-['Open_Sans',sans-serif] text-[14px] placeholder-[#a8a8a8] outline-none" />
        <Svg w={12} h={17} cls="text-[#bbb]"><rect x="3.500" y=".5" width="5" height="10" rx="2" /><path d="M1 7.500V10C1 14 11 14 11 10V7.500M6 13V16M3.500 16.500H8.500" /></Svg>
      </div>
      <button aria-label="Task view" className={app}><Svg w={20} h={15}><path d="M4.500 .5H15.500V14.500H4.500ZM3 2.500H.5V12.500H3M17 2.500H19.500V12.500H17" /></Svg></button>
      <button aria-label="Edge Legacy" className={`${app} ml-0.5`}><FaEdgeLegacy size={22} color="#0b7cd8" /></button>
      <button aria-label="File Explorer" className={app}><svg width="22" height="20" viewBox="0 0 22 20" aria-hidden="true"><path d="M0 0H9L10.500 2H22V19H0Z" fill="#f8cf5e" /><path d="M0 4H22V19H0Z" fill="#ffe794" /><path d="M1.500 1H8V2.500H1.500Z" fill="#dd9f2e" /><path d="M4 20V11H18V20H14V15H8V20Z" fill="#35a8e0" /></svg></button>
      <button aria-label="Microsoft Store" className={app}><svg width="23" height="23" viewBox="0 0 23 23" aria-hidden="true"><path d="M0 5H23V20Q23 23 20 23H3Q0 23 0 20Z" fill="#fff" /><path d="M7.500 5V4A4 3.500 0 0 1 15.500 4V5" fill="none" stroke="#fff" strokeWidth="1.200" /><path d="M6 8.500H11V13.500H6Z" fill="#f25022" /><path d="M12 8.500H17V13.500H12Z" fill="#7fba00" /><path d="M6 14.500H11V19.500H6Z" fill="#00a4ef" /><path d="M12 14.500H17V19.500H12Z" fill="#ffb900" /></svg></button>
      <button aria-label="Mail" className={app}><svg width="24" height="20" viewBox="0 0 24 20" aria-hidden="true"><path d="M0 6L12 0L24 6V20H0Z" fill="#fff" /><path d="M1 6H22L12 12L18 17L9 11.500Z" fill="#020409" /></svg></button>
      <button aria-label="Edge" className={app}>
        <svg width="0" height="0" className="absolute" aria-hidden="true"><linearGradient id="edge" x1="0" y1="1" x2="1" y2="0"><stop offset="0" stopColor="#0c59a4" /><stop offset=".5" stopColor="#27a3de" /><stop offset="1" stopColor="#5ad75a" /></linearGradient></svg>
        <FaEdge size={24} style={{ fill: 'url(#edge)' }} />
      </button>
      <button aria-label="Visual Studio Code" className={app}><svg width="24" height="24" viewBox="0 0 24 24" aria-hidden="true"><path d="M17.500 0L24 3V21L17.500 24L7 14L2.500 17.500L0 16L15 2Z" fill="#1f9cf0" /><path d="M17.500 6.500L4 17L2.500 17.500L0 16L4.500 12L0 8L2.500 6.500L17.500 17.500Z" fill="#0f7ac5" /><path d="M17.500 6.500V17.500L10 12Z" fill="#020409" /><path d="M17.500 0L24 3V21L17.500 24Z" fill="#2bb0f5" /></svg></button>
      <button aria-label="Chrome" className={app}><svg width="24" height="24" viewBox="0 0 24 24" aria-hidden="true"><circle cx="12" cy="12" r="12" fill="#fbc116" /><path d="M12 12L6.800 15L1.600 6A12 12 0 0 1 22.400 6H12Z" fill="#ea4335" /><path d="M1.600 6L6.800 15L12 18L17.200 15L12 24A12 12 0 0 1 1.600 6Z" fill="#2c9f45" /><circle cx="12" cy="12" r="5.800" fill="#fff" /><circle cx="12" cy="12" r="4.500" fill="#2f7de9" /></svg></button>
      <button aria-label="Spotify" className={app}><FaSpotify size={24} color="#1ed760" /></button>
      <button aria-label="Tableau" className="flex w-12 shrink-0 items-center justify-center border-b-2 border-[#76b9ed] bg-[#33373c]"><TableauMark size={23} /></button>
      <div className="ml-auto flex items-center">
        <Svg w={12} h={8}><path d="M.5 7L6 1.500L11.500 7" strokeWidth="1.300" /></Svg>
        <Svg w={15} h={10} cls="ml-3"><path d="M.5 .5H12.500V9.500H.5ZM13 3.500H14.500V6.500H13" /><path d="M2.500 2.500H6.500V7.500H2.500Z" fill="#fff" /></Svg>
        <Svg w={13} h={13} cls="ml-3"><path d="M1 12.500A11 11 0 0 1 12.500 1M4 12.500A8 8 0 0 1 12.500 4.500M7 12.500A5.500 5.500 0 0 1 12.500 7.500" strokeWidth="1.200" /><circle cx="11.500" cy="11.500" r="1.500" fill="#fff" stroke="none" /></Svg>
        <Svg w={17} h={14} cls="ml-2"><path d="M.5 5H3L6.500 1.500V12.500L3 9H.5ZM8.500 5Q9.500 7 8.500 9M11 3.500Q13 7 11 10.500M13.500 2Q17 7 13.500 12" /></Svg>
        <div className="ml-1.5 w-[60px] text-center text-[12px] leading-[18px] whitespace-nowrap"><p>2:22 PM</p><p>10/19/2023</p></div>
        <Svg w={16} h={16} cls="mr-5 ml-3.5"><path d="M.5 .5H15.500V12.500H10.500L8 15L5.500 12.500H.5Z" /></Svg>
        <span className="mr-1 h-10 w-px bg-[#555]" />
      </div>
    </div>
  );
}

export default function App() {
  return (
    <div className="relative flex h-screen flex-col overflow-hidden bg-white font-['Roboto','Noto_Sans',sans-serif]">
      <TitleBar />
      <Toolbar />
      <main className="flex min-h-0 flex-1 overflow-hidden">
        <LeftPanel />
        <div className="flex min-w-0 flex-1 bg-[#f5f5f5]">
          <div className="flex shrink-0 overflow-hidden bg-white pt-1.5 pl-1.5">
            <Chart />
            <Legends />
          </div>
          <div className="ml-auto flex w-[17px] flex-col items-center border-l border-white bg-[#f0f0f0] pt-4">
            <span className="h-[414px] w-4 bg-[#cdcdcd]" />
            <Svg w={8} h={6} cls="mt-auto mb-[5px] text-[#555]"><path d="M.5 1L4 4.500L7.500 1" strokeWidth="1.800" /></Svg>
          </div>
        </div>
      </main>
      <SheetTabs />
      <StatusBar />
      <Taskbar />
      <ShowMe />
    </div>
  );
}
